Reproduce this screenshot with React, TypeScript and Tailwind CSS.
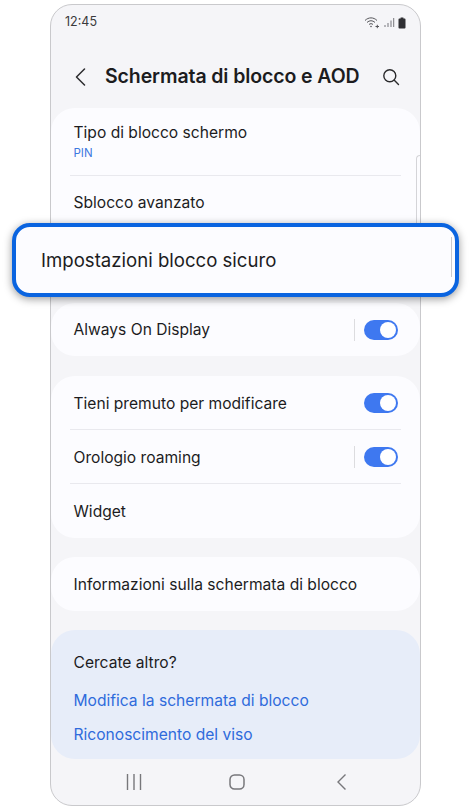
import React from "react";

const font = { fontFamily: '"Inter", "Roboto", sans-serif' };

const Toggle = ({ divider }: { divider?: boolean }) => (
  <div className="flex items-center">
    {divider && <div className="mr-[9px] h-[22px] w-px bg-[#dcdcdf]" />}
    <div className="flex h-[20px] w-[34px] items-center justify-end rounded-full bg-[#3e78f0] pr-[2px]">
      <div className="h-[16px] w-[16px] rounded-full bg-white" />
    </div>
  </div>
);

const Row = ({ children, right, line, low }: { children?: React.ReactNode; right?: React.ReactNode; line?: boolean; low?: boolean }) => (
  <div className={`mx-[19px] flex h-[54px] items-center justify-between pl-[3.5px] pr-[3px] ${line ? "border-b border-[#e9e9ee]" : ""}`}>
    <span className={`text-[15.6px] text-[#1c1c1e] ${low ? "pt-[2px]" : ""}`}>{children}</span>
    {right}
  </div>
);

const App = () => {
  return (
    <div className="relative h-[810px] w-[470px] overflow-hidden bg-white" style={font}>
      {/* Phone */}
      <div className="ml-[50px] mt-[4px] flex h-[802px] w-[371px] flex-col overflow-hidden rounded-[22px] border border-[#c9c9cc] bg-[#f5f5f8]">
        {/* Status bar */}
        <div className="flex h-[31px] items-center justify-between pl-[14px] pr-[14px] pt-[4px]">
          <span className="text-[12.5px] text-[#3a3a3c]">12:45</span>
          <div className="flex items-center gap-[3px]">
            <svg width="17" height="13" viewBox="0 0 17 13" fill="none" stroke="#55555a" strokeWidth="1">
              <path d="M1 4.5C4.5 1 9.5 1 13 4.5" />
              <path d="M3 6.5C5.5 4.2 8.5 4.2 11 6.5" />
              <path d="M5 8.5C6.2 7.4 7.8 7.4 9 8.5" />
              <circle cx="7" cy="10.5" r="0.8" fill="#55555a" stroke="none" />
              <path d="M11.5 10.5H15M13.3 8.8V12.2" />
            </svg>
            <svg width="11" height="11" viewBox="0 0 11 11" fill="#77777c">
              <rect x="0.5" y="8" width="1" height="2" />
              <rect x="3.5" y="6" width="1" height="4" />
              <rect x="6.5" y="3.5" width="1" height="6.5" />
              <rect x="9.2" y="1" width="1" height="9" />
            </svg>
            <svg width="8" height="12" viewBox="0 0 8 12" fill="#2f2f33">
              <path d="M2.6 0.5H5.4V1.6H6.6C7.2 1.6 7.5 2 7.5 2.5V10.6C7.5 11.2 7.2 11.5 6.6 11.5H1.4C.8 11.5 .5 11.2 .5 10.6V2.5C.5 2 .8 1.6 1.4 1.6H2.6Z" />
            </svg>
          </div>
        </div>

        {/* Header */}
        <div className="flex h-[72px] shrink-0 items-center pl-[23px] pr-[20px] pt-[10px]">
          <svg width="13" height="18" viewBox="0 0 13 18" fill="none" stroke="#2a2a2c" strokeWidth="1.5" strokeLinecap="round" strokeLinejoin="round">
            <path d="M10.5 1L2.5 9L10.5 17" />
          </svg>
          <h1 className="ml-[18px] flex-1 text-[19.5px] font-semibold tracking-[-0.1px] whitespace-nowrap text-[#1c1c1e]">
            Schermata di blocco e AOD
          </h1>
          <svg width="18" height="18" viewBox="0 0 18 18" fill="none" stroke="#2a2a2c" strokeWidth="1.4" strokeLinecap="round">
            <circle cx="7.8" cy="7.8" r="6" />
            <path d="M12.3 12.3L16.5 16.5" />
          </svg>
        </div>

        {/* Cards */}
        <div className="flex flex-col gap-[20px]">
          <div className="h-[175px] rounded-[24px] bg-[#fcfcff]">
            <div className="mx-[19px] flex h-[68px] flex-col justify-center border-b border-[#e9e9ee] pl-[3.5px]">
              <span className="text-[15.6px] leading-[20px] text-[#1c1c1e]">Tipo di blocco schermo</span>
              <span className="pt-[2px] text-[11.5px] leading-[16px] text-[#3e78e0]">PIN</span>
            </div>
            <Row>Sblocco avanzato</Row>
            {/* third row is drawn by the highlight on top */}
            <Row />
          </div>

          <div className="h-[53px] rounded-[24px] bg-[#fcfcff]">
            <Row right={<Toggle divider />}>Always On Display</Row>
          </div>

          <div className="h-[162px] rounded-[24px] bg-[#fcfcff]">
            <Row low line right={<Toggle />}>Tieni premuto per modificare</Row>
            <Row low line right={<Toggle divider />}>Orologio roaming</Row>
            <Row low>Widget</Row>
          </div>

          <div className="-mt-[1px] h-[54px] rounded-[24px] bg-[#fcfcff]">
            <Row low>Informazioni sulla schermata di blocco</Row>
          </div>

          <div className="-mt-[1px] h-[129px] rounded-[24px] bg-[#e7edf9] pl-[22.5px] pt-[22px]">
            <p className="text-[15.6px] leading-[22px] text-[#1c1c1e]">Cercate altro?</p>
            <p className="mt-[16px] text-[15.6px] leading-[22px] text-[#2f6bdc]">Modifica la schermata di blocco</p>
            <p className="mt-[12px] text-[15.6px] leading-[22px] text-[#2f6bdc]">Riconoscimento del viso</p>
          </div>
        </div>

        {/* Nav bar */}
        <div className="flex flex-1 items-center pl-[75px]">
          <svg width="16" height="16" viewBox="0 0 16 16" fill="none" stroke="#77777b" strokeWidth="1.4">
            <path d="M1.5 0V16M8 0V16M14.5 0V16" />
          </svg>
          <svg className="ml-[87px]" width="16" height="16" viewBox="0 0 16 16" fill="none" stroke="#77777b" strokeWidth="1.5">
            <rect x="1" y="1" width="14" height="14" rx="4.5" />
          </svg>
          <svg className="ml-[92px]" width="10" height="16" viewBox="0 0 10 16" fill="none" stroke="#77777b" strokeWidth="1.4">
            <path d="M8.5 0.5L1 8L8.5 15.5" />
          </svg>
        </div>
      </div>

      {/* Scrollbar */}
      <div className="absolute left-[416px] top-[155px] h-[70px] w-[4px] rounded-tl-[4px] border-l border-t border-[#d4d4d8]" />

      {/* Highlight */}
      <div className="absolute left-[12px] top-[223px] flex h-[74px] w-[447px] items-center rounded-[18px] border-[4px] border-[#0a64e0] bg-[#fcfcff] pl-[25px] pt-[2px] shadow-[0_2px_8px_rgba(0,0,0,0.4)]">
        <span className="text-[18.6px] text-[#1c1c1e]">Impostazioni blocco sicuro</span>
        <div className="absolute right-[3px] top-[10px] h-[40px] w-px bg-[#c9c9cc]" />
      </div>
    </div>
  );
};

export default App;
